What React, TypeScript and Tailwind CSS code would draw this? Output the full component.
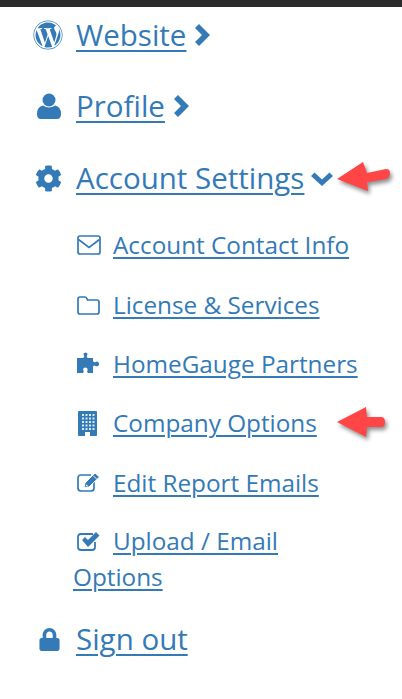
import type { ReactNode } from "react";
import { FaCog, FaLock, FaWordpress } from "react-icons/fa";

// Font Awesome 4 look: react-icons only ships the later, different outlines for these
function ChevronRight({ className }: { className: string }) {
  return (
    <svg width="15" height="22" viewBox="0 0 15 22" className={className}>
      <path d="M0 4 L4 0 L15 11 L4 22 L0 18 L7 11 Z" fill="currentColor" />
    </svg>
  );
}

function ChevronDown({ className }: { className: string }) {
  return (
    <svg width="22" height="14" viewBox="0 0 22 14" className={className}>
      <path d="M0 4 L3.5 0.5 L11 7.5 L18.5 0.5 L22 4 L11 14 Z" fill="currentColor" />
    </svg>
  );
}

function UserIcon() {
  return (
    <svg width="24" height="26" viewBox="0 0 24 26" className="ml-[4px]">
      <circle cx="12" cy="7" r="6.5" fill="currentColor" />
      <path d="M6 12.5 Q12 16.5 18 12.5 Q24 13.5 24 21 Q24 26 20 26 L4 26 Q0 26 0 21 Q0 13.5 6 12.5 Z" fill="currentColor" />
    </svg>
  );
}

function EnvelopeIcon() {
  return (
    <svg width="24" height="20" viewBox="0 0 24 20" fill="none" stroke="currentColor" strokeWidth="1.7">
      <rect x="1" y="1" width="22" height="18" rx="2" />
      <path d="M1.5 4.5 L12 12.5 L22.5 4.5" />
    </svg>
  );
}

function FolderIcon() {
  return (
    <svg width="23" height="19" viewBox="0 0 23 19" fill="none" stroke="currentColor" strokeWidth="1.7">
      <path d="M3 1 L8 1 Q9.5 1 10 3 L10.5 4 L20 4 Q22 4 22 6 L22 16 Q22 18 20 18 L3 18 Q1 18 1 16 L1 3 Q1 1 3 1 Z" />
    </svg>
  );
}

function PuzzleIcon() {
  return (
    <svg width="23" height="22" viewBox="0 0 23 22">
      <path
        d="M0 6 L6 6 Q8 5 7 3.5 Q5.5 1 8.5 0.5 Q11.5 1 10 3.5 Q9 5 11 6 L16 6 L16 9 Q17 11 18.5 10 Q20.5 9 21.5 10.5 Q23 12.5 21 14 Q19.5 14.5 18.5 14 Q17 13 16 14.5 L16 21 L11 21 Q9.5 20 10.5 18.5 Q11 15.5 8 15.5 Q5.5 16 6.5 18.5 Q7 20 6 21 L0 21 Z"
        fill="currentColor"
      />
    </svg>
  );
}

function BuildingIcon() {
  const windows = [4, 7.5, 11, 14.5];
  const rows = [3, 6.5, 10, 13.5, 17];
  return (
    <svg width="19" height="25" viewBox="0 0 19 25" className="ml-[1px]">
      <rect width="19" height="25" rx="1" fill="currentColor" />
      {rows.map((y) =>
        windows.map((x) => <rect key={`${x}-${y}`} x={x} y={y} width="2" height="2" fill="#dce8f3" />),
      )}
      <rect x="7" y="21" width="5" height="4" fill="#fff" />
    </svg>
  );
}

function EditIcon() {
  return (
    <svg width="24" height="20" viewBox="0 0 24 20">
      <path
        d="M14 3 L4 3 Q1 3 1 6 L1 16 Q1 19 4 19 L14 19 Q17 19 17 16 L17 10"
        fill="none"
        stroke="currentColor"
        strokeWidth="1.7"
      />
      <path d="M7 15.5 L8 11 L18 1 L22.5 5 L12 15 Z" fill="currentColor" stroke="#fff" strokeWidth="1" />
      <path d="M16 3.5 L20 7.5" stroke="#fff" strokeWidth="0.9" />
      <path d="M9 13 L10.5 14" stroke="#fff" strokeWidth="1.2" />
    </svg>
  );
}

function CheckIcon() {
  return (
    <svg width="23" height="19" viewBox="0 0 23 19">
      <path
        d="M16 2 L4 2 Q1 2 1 5 L1 15 Q1 18 4 18 L15 18 Q18 18 18 15 L18 10"
        fill="none"
        stroke="currentColor"
        strokeWidth="1.8"
      />
      <path d="M5 8 L8 5 L11 8 L19 0 L22.5 3.5 L11 15 Z" fill="currentColor" />
    </svg>
  );
}

function RedArrow({ d, className }: { d: string; className: string }) {
  return (
    <svg
      width="60"
      height="40"
      viewBox="0 0 60 40"
      className={`absolute drop-shadow-[2px_3px_2px_rgba(0,0,0,0.45)] ${className}`}
    >
      <path d={d} fill="#ff4545" />
    </svg>
  );
}

function MainItem({ icon, label, after, className }: { icon: ReactNode; label: string; after?: ReactNode; className: string }) {
  return (
    <div className={`flex items-center pl-[33px] h-[40px] text-[29.5px] ${className}`}>
      <span className="w-[43px] shrink-0">{icon}</span>
      <a href="#" className="underline decoration-2 underline-offset-[4px]">{label}</a>
      {after}
    </div>
  );
}

function SubItem({ icon, label, className, iconClass = "align-[-1px]" }: { icon: ReactNode; label: string; className: string; iconClass?: string }) {
  return (
    <div className={`pl-[73px] pr-[40px] text-[24.3px] leading-[36px] ${className}`}>
      <span className={`inline-block w-[40px] pl-[4px] ${iconClass}`}>{icon}</span>
      <a href="#" className="underline decoration-2 underline-offset-[3px]">{label}</a>
    </div>
  );
}

export default function App() {
  return (
    <div className="relative w-[402px] h-[699px] overflow-hidden bg-white text-[#337ab7] font-['Open_Sans',sans-serif]">
      <div className="h-[7px] bg-[#2b2b2b]" />
      <MainItem
        className="mt-[8px]"
        icon={<FaWordpress size={30} />}
        label="Website"
        after={<ChevronRight className="ml-[9px]" />}
      />
      <MainItem
        className="mt-[31px]"
        icon={<UserIcon />}
        label="Profile"
        after={<ChevronRight className="ml-[9px]" />}
      />
      <MainItem
        className="mt-[32px]"
        icon={<FaCog size={27} className="ml-[2px]" />}
        label="Account Settings"
        after={<ChevronDown className="ml-[7px] mt-[2px]" />}
      />
      <RedArrow
        className="left-[337px] top-[162px]"
        d="M0 17 L26 0 L30 11 L49 7 Q53 7 53 11 Q53 16 49 17 Q40 19 30 20 L31 29 Z"
      />

      <SubItem className="mt-[29px]" icon={<EnvelopeIcon />} label="Account Contact Info" />
      <SubItem className="mt-[24px]" icon={<FolderIcon />} label="License & Services" />
      <SubItem className="mt-[23px]" icon={<PuzzleIcon />} label="HomeGauge Partners" />
      <SubItem className="mt-[23px]" icon={<BuildingIcon />} iconClass="align-[-4px]" label="Company Options" />
      <RedArrow
        className="left-[337px] top-[407px]"
        d="M0 15 L29 0 L30 10 L44 10 Q48 10 48 15 Q48 20 44 20 L30 20 L29 30 Z"
      />
      <SubItem className="mt-[24px]" icon={<EditIcon />} iconClass="align-[0px]" label="Edit Report Emails" />
      <SubItem className="mt-[22px]" icon={<CheckIcon />} iconClass="align-[-1px]" label="Upload / Email Options" />

      <MainItem
        className="mt-[24px]"
        icon={<FaLock size={23} className="ml-[5px]" />}
        label="Sign out"
      />
    </div>
  );
}
